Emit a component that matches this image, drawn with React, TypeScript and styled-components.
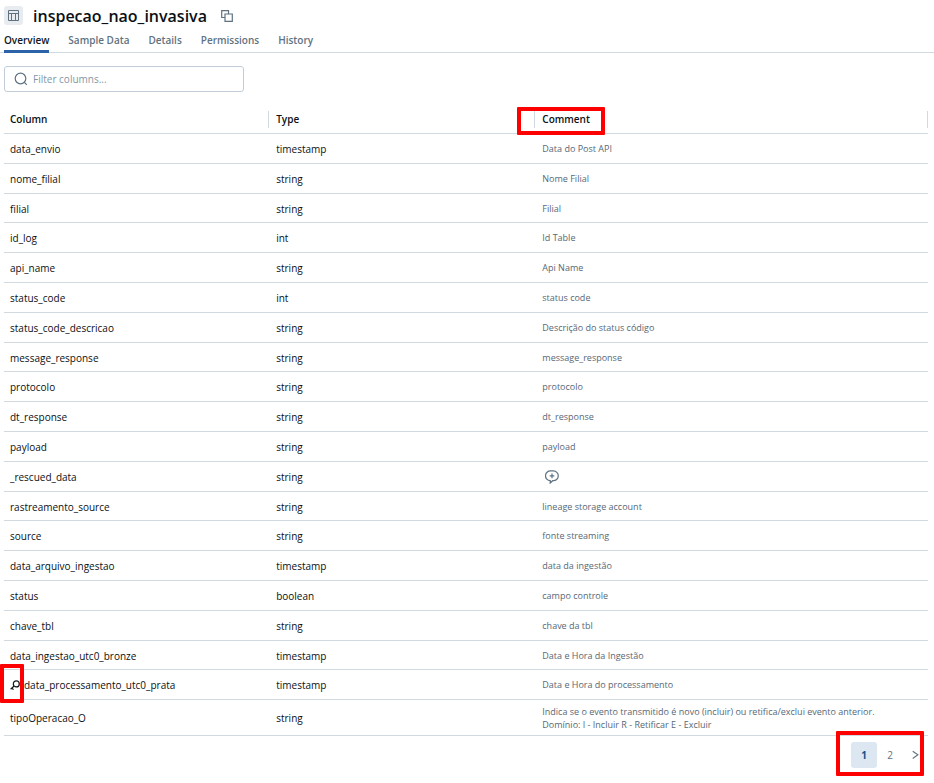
import React from "react";
import styled, { createGlobalStyle, css } from "styled-components";

const GlobalStyle = createGlobalStyle`
  *, *::before, *::after { box-sizing: border-box; }
  body {
    margin: 0;
    background: #ffffff;
    color: #0b1014;
    font-family: "Open Sans", "Noto Sans", sans-serif;
    font-size: 10px;
    line-height: 14px;
  }
  button, input { font: inherit; color: inherit; }
`;

const Page = styled.main`
  display: flex;
  flex-direction: column;
  padding: 5px 0 14px;
`;

const TitleBar = styled.header`
  display: flex;
  align-items: center;
  height: 21px;
  padding-left: 4px;
`;

const EntityBadge = styled.span`
  display: grid;
  place-items: center;
  width: 19px;
  height: 19px;
  border-radius: 3px;
  background: #e8ecf0;
  color: #5f7281;
`;

const Title = styled.h1`
  margin: 0 14px 0 10px;
  font-size: 16px;
  line-height: 22px;
  font-weight: 600;
`;

const IconButton = styled.button`
  display: inline-grid;
  place-items: center;
  padding: 0;
  border: 0;
  background: none;
  color: #5f7281;
  cursor: pointer;
`;

const Tabs = styled.nav`
  display: flex;
  gap: 19px;
  height: 27px;
  padding-left: 4px;
  border-bottom: 1px solid #d1d9e1;
`;

const Tab = styled.a<{ $active?: boolean }>`
  height: 27px;
  padding-top: 7px;
  border-bottom: 3px solid ${(p) => (p.$active ? "#2b62a8" : "transparent")};
  color: ${(p) => (p.$active ? "#11171c" : "#5f7281")};
  font-weight: 600;
  text-decoration: none;
`;

const Content = styled.section`
  padding: 13px 6px 0 4px;
`;

const FilterBox = styled.label`
  display: flex;
  align-items: center;
  gap: 5px;
  width: 240px;
  height: 26px;
  padding: 0 9px;
  border: 1px solid #c0cdd8;
  border-radius: 3px;
  color: #5f7281;
`;

const FilterInput = styled.input`
  flex: 1;
  min-width: 0;
  padding: 0;
  border: 0;
  outline: 0;
  background: none;
  &::placeholder { color: #8396a5; opacity: 1; }
`;

const ColumnsTable = styled.table`
  width: 100%;
  margin-top: 14px;
  border-collapse: separate;
  border-spacing: 0;
  table-layout: fixed;
`;

const HeadCell = styled.th<{ $width?: string }>`
  position: relative;
  width: ${(p) => p.$width ?? "auto"};
  height: 28px;
  padding: 0;
  border-bottom: 1px solid #d1d9e1;
  text-align: left;
  font-weight: 600;
`;

const HeadLabel = styled.div`
  height: 17px;
  padding-left: 7px;
  border-right: 1px solid #d1d9e1;
  line-height: 17px;
  th:first-child > & { padding-left: 6px; }
`;

const Row = styled.tr`
  height: 30px;
  &:nth-child(5n + 3) { height: 29px; }
  &:last-child { height: 36px; }
`;

const Cell = styled.td<{ $muted?: boolean }>`
  position: relative;
  padding: 2px 7px 0;
  border-bottom: 1px solid #d1d9e1;
  vertical-align: middle;
  line-height: 13px;
  &:first-child { padding-left: 6px; }
  ${(p) =>
    p.$muted &&
    css`
      padding-top: 0;
      color: #566876;
      font-size: 9px;
      white-space: pre-line;
    `}
`;

const KeyedName = styled.span`
  display: flex;
  align-items: center;
  gap: 3px;
`;

const AddComment = styled(IconButton)`
  margin-left: 3px;
  vertical-align: middle;
`;

const Pager = styled.nav`
  position: relative;
  display: flex;
  align-items: center;
  width: max-content;
  margin: 6px 8px 0 auto;
`;

const PageButton = styled.button<{ $current?: boolean }>`
  width: 26px;
  height: 26px;
  padding: 0;
  border: 0;
  border-radius: 3px;
  background: ${(p) => (p.$current ? "#dce7f2" : "none")};
  color: ${(p) => (p.$current ? "#0e538b" : "#5f7281")};
  font-weight: ${(p) => (p.$current ? 700 : 400)};
  cursor: pointer;
`;

const NextButton = styled(IconButton)`
  width: 9px;
  height: 26px;
  margin-left: 8px;
`;

const Highlight = styled.span<{ $inset: string; $width?: string }>`
  position: absolute;
  inset: ${(p) => p.$inset};
  width: ${(p) => p.$width ?? "auto"};
  border: 4px solid #ff0000;
  border-radius: 1px;
  pointer-events: none;
`;

const TableIcon = () => (
  <svg width="11" height="11" viewBox="0 0 11 11" fill="none" stroke="currentColor" aria-hidden="true">
    <path d="M.5.5h10v10H.5zM.5 3.5h10M3.5 3.5v7M7.5 3.5v7" />
  </svg>
);

const CopyIcon = () => (
  <svg width="12" height="12" viewBox="0 0 12 12" fill="none" stroke="currentColor" strokeWidth="1.2" aria-hidden="true">
    <path d="M3.5 7.5H.7V.7h6.8v2.8M4 4h7.3v7.3H4z" />
  </svg>
);

const SearchIcon = () => (
  <svg width="14" height="14" viewBox="0 0 14 14" fill="none" stroke="currentColor" strokeWidth="1.2" aria-hidden="true">
    <circle cx="6.5" cy="6.5" r="5.3" />
    <path d="m10.2 10.2 2.6 2.6" />
  </svg>
);

const KeyIcon = () => (
  <svg width="11" height="11" viewBox="0 0 11 11" fill="none" stroke="#11171c" strokeWidth="1.2" role="img" aria-label="Key">
    <circle cx="6.3" cy="3.9" r="3" />
    <path d="M4.1 6 .6 9.2M1.9 8l1.6 1.7" />
  </svg>
);

const CommentIcon = () => (
  <svg width="14" height="14" viewBox="0 0 14 14" fill="none" stroke="currentColor" strokeWidth="1.2" aria-hidden="true">
    <path d="M5.2 10.7A4.9 4.9 0 0 1 5.6.9h2.8a4.9 4.9 0 0 1 0 9.8h-.7L5.2 13zM7 3.6v4.6M4.7 5.9h4.6" />
  </svg>
);

const NextIcon = () => (
  <svg width="7" height="10" viewBox="0 0 7 10" fill="none" stroke="currentColor" strokeWidth="1.1" aria-hidden="true">
    <path d="m.7 1.2 5.2 3.6L.7 8.5" />
  </svg>
);

const tabs = ["Overview", "Sample Data", "Details", "Permissions", "History"];

type Column = { name: string; type: string; comment?: string; keyed?: boolean };

const columns: Column[] = [
  { name: "data_envio", type: "timestamp", comment: "Data do Post API" },
  { name: "nome_filial", type: "string", comment: "Nome Filial" },
  { name: "filial", type: "string", comment: "Filial" },
  { name: "id_log", type: "int", comment: "Id Table" },
  { name: "api_name", type: "string", comment: "Api Name" },
  { name: "status_code", type: "int", comment: "status code" },
  { name: "status_code_descricao", type: "string", comment: "Descrição do status código" },
  { name: "message_response", type: "string", comment: "message_response" },
  { name: "protocolo", type: "string", comment: "protocolo" },
  { name: "dt_response", type: "string", comment: "dt_response" },
  { name: "payload", type: "string", comment: "payload" },
  { name: "_rescued_data", type: "string" },
  { name: "rastreamento_source", type: "string", comment: "lineage storage account" },
  { name: "source", type: "string", comment: "fonte streaming" },
  { name: "data_arquivo_ingestao", type: "timestamp", comment: "data da ingestão" },
  { name: "status", type: "boolean", comment: "campo controle" },
  { name: "chave_tbl", type: "string", comment: "chave da tbl" },
  { name: "data_ingestao_utc0_bronze", type: "timestamp", comment: "Data e Hora da Ingestão" },
  { name: "data_processamento_utc0_prata", type: "timestamp", comment: "Data e Hora do processamento", keyed: true },
  {
    name: "tipoOperacao_O",
    type: "string",
    comment:
      "Indica se o evento transmitido é novo (incluir) ou retifica/exclui evento anterior.\nDomínio: I - Incluir R - Retificar E - Excluir",
  },
];

export default function App() {
  return (
    <>
      <GlobalStyle />
      <Page>
        <TitleBar>
          <EntityBadge><TableIcon /></EntityBadge>
          <Title>inspecao_nao_invasiva</Title>
          <IconButton aria-label="Copy name"><CopyIcon /></IconButton>
        </TitleBar>
        <Tabs>
          {tabs.map((tab, i) => (
            <Tab key={tab} href="#" $active={i === 0} aria-current={i === 0 ? "page" : undefined}>
              {tab}
            </Tab>
          ))}
        </Tabs>
        <Content>
          <FilterBox>
            <SearchIcon />
            <FilterInput type="text" placeholder="Filter columns..." aria-label="Filter columns" />
          </FilterBox>
          <ColumnsTable>
            <thead>
              <tr>
                <HeadCell scope="col" $width="28.7%"><HeadLabel>Column</HeadLabel></HeadCell>
                <HeadCell scope="col" $width="28.8%"><HeadLabel>Type</HeadLabel></HeadCell>
                <HeadCell scope="col">
                  <HeadLabel>Comment</HeadLabel>
                  <Highlight $inset="1px auto -2px -18px" $width="88px" />
                </HeadCell>
              </tr>
            </thead>
            <tbody>
              {columns.map((c) => (
                <Row key={c.name}>
                  <Cell>
                    {c.keyed ? <KeyedName><KeyIcon />{c.name}</KeyedName> : c.name}
                    {c.keyed && <Highlight $inset="-6px auto -4px -4px" $width="24px" />}
                  </Cell>
                  <Cell>{c.type}</Cell>
                  <Cell $muted>
                    {c.comment ?? <AddComment aria-label="Add comment"><CommentIcon /></AddComment>}
                  </Cell>
                </Row>
              ))}
            </tbody>
          </ColumnsTable>
          <Pager aria-label="Pagination">
            <PageButton $current aria-current="page">1</PageButton>
            <PageButton>2</PageButton>
            <NextButton aria-label="Next page"><NextIcon /></NextButton>
            <Highlight $inset="-11px -4px -8px -15px" />
          </Pager>
        </Content>
      </Page>
    </>
  );
}
